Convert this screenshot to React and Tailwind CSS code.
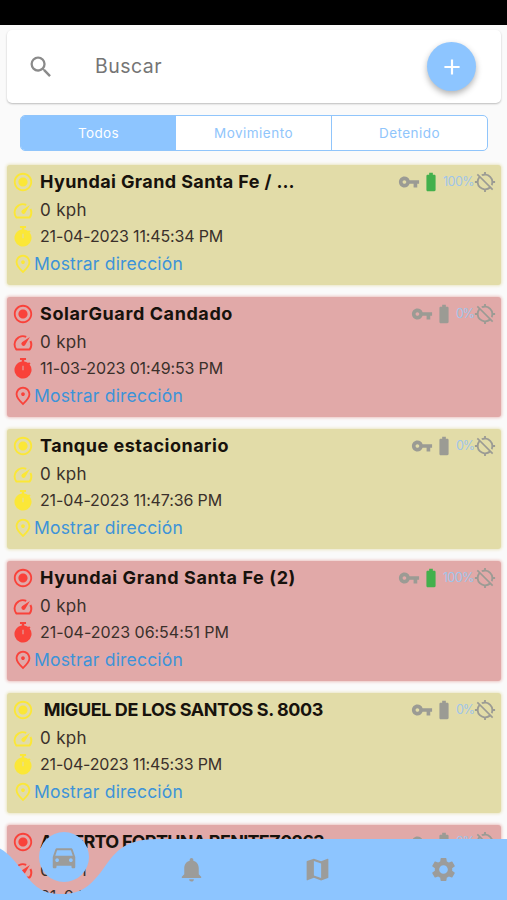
import React, { useLayoutEffect, useRef, useState } from "react";
import {
  MdSearch,
  MdAdd,
  MdRadioButtonChecked,
  MdVpnKey,
  MdBatteryFull,
  MdLocationDisabled,
  MdSpeed,
  MdOutlinePlace,
  MdDirectionsCar,
  MdNotifications,
  MdMap,
  MdSettings,
} from "react-icons/md";

// Text spaced out so that it fills the given width.
function Fit({ width, className = "", children }) {
  const ref = useRef(null);
  const [spacing, setSpacing] = useState(0);
  useLayoutEffect(() => {
    const el = ref.current;
    el.style.letterSpacing = "0px";
    const natural = el.getBoundingClientRect().width;
    setSpacing((width - natural) / children.length);
    el.style.letterSpacing = `${(width - natural) / children.length}px`;
  }, [width, children]);
  return (
    <span ref={ref} className={`inline-block whitespace-pre ${className}`} style={{ letterSpacing: `${spacing}px` }}>
      {children}
    </span>
  );
}

function Stopwatch() {
  return (
    <svg viewBox="0 0 24 24" className="size-[22px]" fill="currentColor">
      <path
        d="M8.700 1h6.600v2.400h-2v1.500a9.300 9.300 0 0 1 4.300 1.700l1-1 1.600 1.600-1 1A9.300 9.300 0 1 1 10.700 4.900V3.400h-2zM11.400 9.500v5h1.200v-5z"
        fillRule="evenodd"
      />
    </svg>
  );
}

function Speedometer() {
  return (
    <svg viewBox="0 0 24 24" className="size-[22px]" fill="none" stroke="currentColor" strokeWidth="2.200">
      <path d="M15.500 5.300A9 9 0 0 0 4.700 19h14.600a9 9 0 0 0 .8-9.200" strokeLinejoin="round" />
      <path d="M19.500 5.500l-5.300 8.900a2.200 2.200 0 1 1-3.300-3.200z" fill="currentColor" stroke="none" />
    </svg>
  );
}

const vehicles = [
  { name: "Hyundai Grand Santa Fe / …", w: 255, date: "21-04-2023 11:45:34 PM", dw: 183, battery: 100, tone: "yellow" },
  { name: "SolarGuard Candado", w: 193, date: "11-03-2023 01:49:53 PM", dw: 183, battery: 0, tone: "red" },
  { name: "Tanque estacionario", w: 189, date: "21-04-2023 11:47:36 PM", dw: 182, battery: 0, tone: "yellow" },
  { name: "Hyundai Grand Santa Fe (2)", w: 256, date: "21-04-2023 06:54:51 PM", dw: 189, battery: 100, tone: "red" },
  { name: " MIGUEL DE LOS SANTOS S. 8003", w: 283, date: "21-04-2023 11:45:33 PM", dw: 182, battery: 0, tone: "yellow" },
  { name: "ALBERTO FORTUNA BENITEZ0263", w: 284, date: "21-04-2023", dw: 91, battery: 0, tone: "red" },
];

function VehicleCard({ v }) {
  const red = v.tone === "red";
  return (
    <article
      className={`flex h-[120px] shrink-0 justify-between rounded-[3px] pl-[5px] pr-[5px] ${
        red ? "bg-[#e1a9a8] shadow-[0_0_3px_1px_#ecc4c2]" : "bg-[#e2dca8] shadow-[0_0_3px_1px_#ebe6c4]"
      }`}
    >
      <div className={red ? "text-[#f9423a]" : "text-[#fbe737]"}>
        <div className="flex h-[33px] items-center gap-[6px]">
          <MdRadioButtonChecked size={22} />
          <Fit width={v.w} className="text-[18px] font-bold leading-none text-[#17120c]">{v.name}</Fit>
        </div>
        <div className="flex h-[25px] items-center gap-[6px]">
          <Speedometer />
          <Fit width={47} className="text-[17px] leading-none text-[#3a302b]">0 kph</Fit>
        </div>
        <div className="flex h-[26px] items-center gap-[6px]">
          <Stopwatch />
          <Fit width={v.dw} className="text-[16px] leading-none text-[#3a302b]">{v.date}</Fit>
        </div>
        <div className="flex h-[29px] items-center">
          <MdOutlinePlace size={22} />
          <Fit width={149} className="text-[17.5px] leading-none text-[#3d93d8]">Mostrar dirección</Fit>
        </div>
      </div>
      <div className="flex h-[34px] items-center text-[#9b9b94]">
        <MdVpnKey size={22} />
        <MdBatteryFull size={22} className={v.battery ? "text-[#43b04c]" : ""} />
        <Fit width={v.battery ? 31 : 18} className="ml-px text-[12.5px] leading-none text-[#9fc5ea]">{`${v.battery}%`}</Fit>
        <MdLocationDisabled size={22} />
      </div>
    </article>
  );
}

export default function App() {
  return (
    <div className="relative flex h-[900px] w-[507px] flex-col overflow-hidden bg-[#fafafa] font-['Inter','Noto_Sans',sans-serif]">
      <div className="h-[25px] shrink-0 bg-black" />
      <div className="ml-[7px] mr-[6px] mt-[5px] flex h-[73px] shrink-0 items-center rounded-[5px] bg-white pl-[20px] pr-[25px] shadow-[0_1px_2px_rgba(0,0,0,0.25)]">
        <MdSearch size={28} className="text-[#8a8a8a]" />
        <Fit width={67} className="ml-[40px] text-[19.5px] leading-none text-[#757575]">Buscar</Fit>
        <button className="ml-auto flex size-[49px] items-center justify-center rounded-full bg-[#8dc5ff] text-white shadow-[0_3px_6px_rgba(0,0,0,0.3)]">
          <MdAdd size={26} />
        </button>
      </div>
      <div className="ml-[20px] mr-[19px] mt-[12px] flex h-[36px] shrink-0 overflow-hidden rounded-[5px] border-[1.500px] border-[#90c5fb] bg-white text-[13.5px] text-[#90c5fb]">
        <div className="flex w-[155px] items-center justify-center bg-[#8dc5ff] text-white">
          <Fit width={41}>Todos</Fit>
        </div>
        <div className="flex flex-1 items-center justify-center border-r-[1.500px] border-[#90c5fb]">
          <Fit width={79}>Movimiento</Fit>
        </div>
        <div className="flex w-[155px] items-center justify-center">
          <Fit width={61}>Detenido</Fit>
        </div>
      </div>
      <main className="ml-[7px] mr-[6px] mt-[14px] flex flex-col gap-[12px]">
        {vehicles.map((v) => (
          <VehicleCard key={v.name} v={v} />
        ))}
      </main>
      <nav className="absolute inset-x-0 bottom-0 h-[68px] text-[#9c9c9a]">
        <svg viewBox="0 0 507 68" className="absolute inset-0 h-full w-full">
          <path
            d="M0 16.500C10 22 17 32 25 42C36 57 45 62 62 62C83 62 91 52 101 40C114 22 122 7 157 7H507V68H0Z"
            fill="#8dc5ff"
          />
        </svg>
        <div className="relative flex h-full">
          <div className="flex w-[128px] justify-center">
            <div className="flex size-[50px] items-center justify-center rounded-full bg-[#8dc5ff]">
              <MdDirectionsCar size={30} />
            </div>
          </div>
          <div className="flex w-[126px] justify-center pt-[23px]"><MdNotifications size={29} /></div>
          <div className="flex w-[126px] justify-center pt-[23px]"><MdMap size={29} /></div>
          <div className="flex w-[127px] justify-center pt-[23px]"><MdSettings size={29} /></div>
        </div>
      </nav>
    </div>
  );
}
